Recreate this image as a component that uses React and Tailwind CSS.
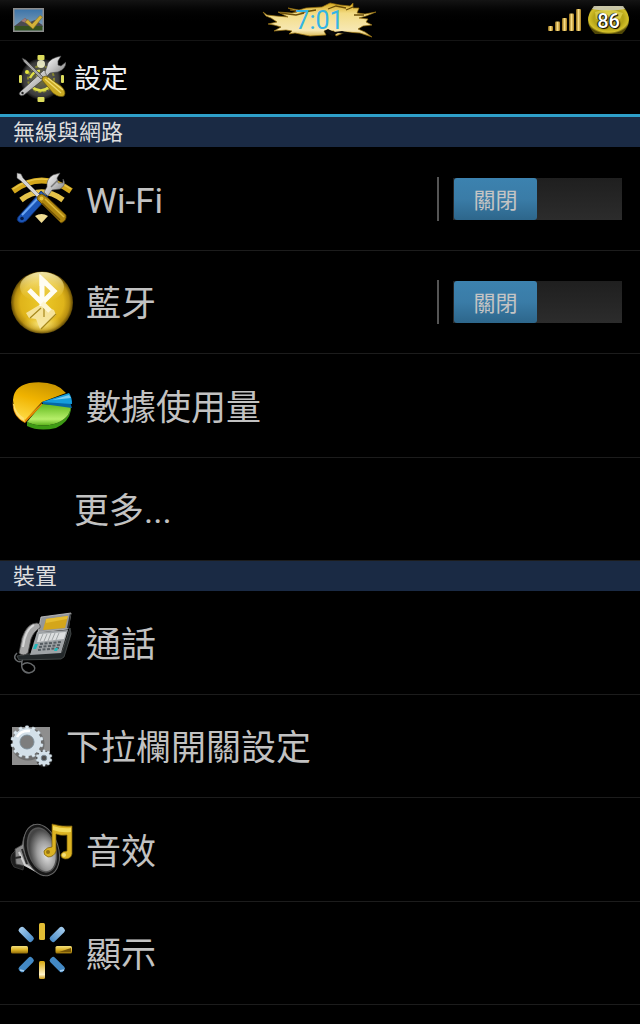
import { useState } from "react";

function Defs() {
  return (
    <svg className="absolute size-0" aria-hidden="true">
      <defs>
        <linearGradient id="gold" x1="0" y1="0" x2="0" y2="1">
          <stop offset="0" stopColor="#f3df7c" />
          <stop offset="0.5" stopColor="#dcb326" />
          <stop offset="1" stopColor="#8f6a08" />
        </linearGradient>
        <linearGradient id="goldBar" x1="0" y1="0" x2="1" y2="0">
          <stop offset="0" stopColor="#8a6410" />
          <stop offset="0.5" stopColor="#f7dc84" />
          <stop offset="1" stopColor="#a87c1c" />
        </linearGradient>
        <linearGradient id="steel" x1="0" y1="0" x2="1" y2="1">
          <stop offset="0" stopColor="#ffffff" />
          <stop offset="0.5" stopColor="#c4c4c4" />
          <stop offset="1" stopColor="#767676" />
        </linearGradient>
        <linearGradient id="blue" x1="0" y1="0" x2="0" y2="1">
          <stop offset="0" stopColor="#a6cdee" />
          <stop offset="1" stopColor="#4a8cc8" />
        </linearGradient>
      </defs>
    </svg>
  );
}

function PictureIcon() {
  return (
    <svg className="h-6 w-8" viewBox="0 0 32 24" aria-hidden="true">
      <defs>
        <linearGradient id="sky" x1="0" y1="0" x2="0" y2="1">
          <stop offset="0" stopColor="#3b73a8" />
          <stop offset="1" stopColor="#8fa9bd" />
        </linearGradient>
      </defs>
      <rect x="0.75" y="0.75" width="29.5" height="22.5" fill="url(#sky)" stroke="#8d8d8d" strokeWidth="1.5" />
      <path d="M1.5 18 8 13 12 10 17 14 22 12 29.5 17V19H1.5z" fill="#4b4a50" />
      <path d="M8 13 12 10 16 14 13 15z" fill="#a07a78" />
      <rect x="1.5" y="18" width="28" height="4.5" fill="#35501f" />
      <path d="M12 14 15 11.500 19 16 27 7.500 29.500 9 20 21z" fill="#d2b13a" stroke="#86701d" strokeWidth="0.6" />
    </svg>
  );
}

function Splash() {
  return (
    <svg className="h-10 w-[120px]" viewBox="0 0 120 40" aria-hidden="true">
      <defs>
        <linearGradient id="splash" x1="0" y1="0" x2="0" y2="1">
          <stop offset="0" stopColor="#d6a81c" />
          <stop offset="0.3" stopColor="#f3dc84" />
          <stop offset="0.8" stopColor="#f7e8b4" />
          <stop offset="1" stopColor="#d8b44a" />
        </linearGradient>
      </defs>
      <path
        d="M1 12 5 15 14 16 26 17 16 12 30 13 35 12 26 8 37 10 44 8 60 7 68 3 78 5 88 6 91 3 91 8 97 8 95 13 103 14 114 12 104 16 97 18 106 19 104 22 110 25 101 26 96 29 103 32 110 37 98 33 84 32 74 36 72 31 62 31 64 35 48 36 38 34 33 33 27 34 30 31 24 30 12 31 19 27 12 25 6 24 15 22 9 18 4 16z"
        fill="url(#splash)"
        stroke="#96700e"
        strokeWidth="0.7"
      />
      <path d="M18 13 34 15 42 13M28 10 42 12 54 10M66 9 74 6 84 8M84 10 91 7M92 15 102 15" fill="none" stroke="#6b4e08" strokeWidth="1.3" />
      <path d="M62 31 66 29 72 32 80 31 90 33 84 34 76 33 70 36z" fill="#080808" />
    </svg>
  );
}

function Signal() {
  return (
    <svg className="h-6 w-9" viewBox="0 0 36 24" aria-hidden="true" fill="url(#goldBar)">
      <rect x="1" y="18" width="5" height="5" rx="1" />
      <rect x="8" y="13.500" width="5" height="9.500" rx="1" />
      <rect x="15" y="10" width="5" height="13" rx="1" />
      <rect x="22" y="5.500" width="5" height="17.500" rx="1" />
      <rect x="29" y="1" width="5" height="22" rx="1" />
    </svg>
  );
}

function BatteryShape() {
  return (
    <svg className="col-start-1 row-start-1 h-[30px] w-[43px]" viewBox="0 0 43 30" aria-hidden="true">
      <defs>
        <radialGradient id="battery" cx="0.5" cy="0.45" r="0.55">
          <stop offset="0" stopColor="#d8c832" />
          <stop offset="0.65" stopColor="#b5a416" />
          <stop offset="0.88" stopColor="#d3c02a" />
          <stop offset="1" stopColor="#4f4606" />
        </radialGradient>
      </defs>
      <path d="M7 1H36Q42 8 42 15T35 29H8Q1 22 1 15T7 1z" fill="url(#battery)" />
      <path d="M7 1H36L38 4Q21 7 5 4z" fill="#c9c9c0" opacity="0.85" />
      <path d="M8 7Q21 2 36 8L33 14Q21 10 9 14z" fill="#f1e76c" opacity="0.5" />
    </svg>
  );
}

function HeaderIcon() {
  return (
    <svg className="size-12" viewBox="0 0 48 48" aria-hidden="true">
      <defs>
        <radialGradient id="ball">
          <stop offset="0" stopColor="#74743a" />
          <stop offset="0.6" stopColor="#4c4c4c" />
          <stop offset="0.85" stopColor="#3a3a3a" />
          <stop offset="1" stopColor="#101010" />
        </radialGradient>
      </defs>
      <circle cx="23" cy="24" r="20.500" fill="url(#ball)" />
      <circle cx="23" cy="24" r="13" fill="none" stroke="#86862f" strokeWidth="2" strokeDasharray="3 2" />
      <g fill="#dcdc5c">
        <rect x="19.500" y="0" width="7" height="5" rx="1" />
        <rect x="19.500" y="42" width="7" height="5" rx="1" />
        <rect x="1" y="20" width="3" height="8" rx="1" />
        <rect x="43" y="20" width="3" height="8" rx="1" />
      </g>
      <circle cx="23" cy="9" r="4" fill="#f2f2cc" opacity="0.9" />
      <circle cx="9" cy="17" r="2" fill="#e6e63c" />
      <path d="M12 23Q16 15 22 16M14 32Q23 39 31 32M18 27 20 20" fill="none" stroke="#dede48" strokeWidth="2.500" />
      <path d="M2 37 26 15 31 20 6 40Q3 42 1 39z" fill="url(#steel)" stroke="#363636" strokeWidth="0.7" />
      <circle cx="4.500" cy="38" r="1.200" fill="#222" />
      <path d="M27 17Q29 12 30 8 33 3 43 1L40 6 40 10 43 11 48 7Q48 14 40 17L32 18 29 21z" fill="url(#steel)" stroke="#444" strokeWidth="0.6" />
      <path d="M4 3 8 5 25 22 23 24 6 7z" fill="#a4a4a4" stroke="#333" strokeWidth="0.6" />
      <path d="M24 25Q24 21 28 21L43 31Q49 37 46 41 41 43 35 38z" fill="#c9a922" stroke="#655409" strokeWidth="0.7" />
      <path d="M27 24 43 38M30 23 45 35" stroke="#f0dc70" strokeWidth="1.300" />
    </svg>
  );
}

function WifiIcon() {
  return (
    <svg className="size-16" viewBox="0 0 64 64" aria-hidden="true">
      <path d="M3 24Q31.500 3 61 24" fill="none" stroke="#d3a71c" strokeWidth="6" />
      <path d="M3 22Q31.500 2 61 22" fill="none" stroke="#e6c548" strokeWidth="1.500" />
      <path d="M11 33Q31.500 17 53 33" fill="none" stroke="#e4c249" strokeWidth="5.500" />
      <path d="M25 49Q31.500 45 38 49L31.500 56z" fill="#f1dd93" />
      <path d="M8 50 31 24 38 30 16 54Q12 57 9 55T8 50z" fill="#1c56b8" stroke="#0a2866" strokeWidth="0.8" />
      <path d="M12 48 32 27" stroke="#6aa5f4" strokeWidth="2" />
      <circle cx="12" cy="51.500" r="1.800" fill="#061a45" />
      <path d="M34 25 37 20Q36 12 43 8L50 6 47 11 48 16 53 16 53 12Q57 18 50 22L42 23 38 29z" fill="url(#steel)" stroke="#555" strokeWidth="0.6" />
      <path d="M41 20 48 13" stroke="#777" strokeWidth="1.500" />
      <path d="M7 6 11 7 13 11 30 28 28 31 11 14 7 11z" fill="#d6d6d6" stroke="#555" strokeWidth="0.5" />
      <path d="M27 32Q27 28 32 27L38 31 56 48Q57 54 51 56L32 37z" fill="#b0870f" stroke="#584003" strokeWidth="0.8" />
      <path d="M35 32 54 50" stroke="#dcb93a" strokeWidth="1.600" />
      <path d="M32 36 50 53" stroke="#715207" strokeWidth="1.500" />
      <circle cx="31.500" cy="31.500" r="2" fill="#e6c43e" />
    </svg>
  );
}

function BluetoothIcon() {
  return (
    <svg className="size-16" viewBox="0 0 64 64" aria-hidden="true">
      <defs>
        <radialGradient id="btBall" cx="0.5" cy="0.5" r="0.5">
          <stop offset="0" stopColor="#ecc928" />
          <stop offset="0.7" stopColor="#dfb41a" />
          <stop offset="0.88" stopColor="#b88f10" />
          <stop offset="1" stopColor="#5d4605" />
        </radialGradient>
        <linearGradient id="btShine" x1="0" y1="0" x2="0" y2="1">
          <stop offset="0" stopColor="#fff6bc" stopOpacity="0.9" />
          <stop offset="1" stopColor="#f3d750" stopOpacity="0" />
        </linearGradient>
        <radialGradient id="btGlow">
          <stop offset="0" stopColor="#fff4a2" stopOpacity="0.9" />
          <stop offset="1" stopColor="#f4d64a" stopOpacity="0" />
        </radialGradient>
      </defs>
      <circle cx="32" cy="32.500" r="31" fill="url(#btBall)" />
      <ellipse cx="32" cy="17" rx="22" ry="15" fill="url(#btShine)" />
      <ellipse cx="32" cy="54" rx="20" ry="10" fill="url(#btGlow)" />
      <path d="M31 34 16 43 19 48 26 49 30 59 46 45 44 40z" fill="#f7e8a6" opacity="0.9" />
      <path d="M20 48 31 38M31 59 46 44M34 38V47" stroke="#a7891c" strokeWidth="1.200" />
      <path d="M30 34 45 22" stroke="#a88a1c" strokeWidth="2" />
      <path d="M19 20 32 33 44 21 32 9.500V36" fill="none" stroke="#fffdf2" strokeWidth="5" />
      <path d="M29.500 4 38 12 34 16H29.500z" fill="#fffdf2" />
      <path d="M32 33 40 41" stroke="#fdf6d4" strokeWidth="5" />
    </svg>
  );
}

function PieIcon() {
  return (
    <svg className="size-16" viewBox="0 0 64 64" aria-hidden="true">
      <defs>
        <linearGradient id="pieY" x1="0.6" y1="0" x2="0.2" y2="1">
          <stop offset="0" stopColor="#c99500" />
          <stop offset="0.45" stopColor="#f0b300" />
          <stop offset="1" stopColor="#ffdc46" />
        </linearGradient>
        <linearGradient id="pieG" x1="0" y1="0" x2="0" y2="1">
          <stop offset="0" stopColor="#62b91d" />
          <stop offset="0.7" stopColor="#b7ef6a" />
          <stop offset="1" stopColor="#58b019" />
        </linearGradient>
      </defs>
      <path d="M17 48Q30 54 44 50 60 45 61 32L61 36Q59 48 46 54 29 58 17 52z" fill="#3d9a14" />
      <path d="M32 30 61 32Q60 45 44 50 30 54 17 48z" fill="url(#pieG)" />
      <path d="M3 26Q2 39 15 45L32 29 32 31 15 49Q1 42 3 26z" fill="#e78a00" />
      <path d="M3 26Q4 10 24 8.500 46 7 56 19L32 28 15 46Q3 39 3 26z" fill="url(#pieY)" />
      <path d="M4 30Q6 39 14 44L15 48Q4 43 3 30z" fill="#ffe06c" />
      <path d="M32 28 60 28 62 34 33 30z" fill="#0668a5" />
      <path d="M32 28 59 19Q62 23 62 30z" fill="#159ddd" />
      <path d="M42 26 59 21 61 24z" fill="#7ccdf3" />
    </svg>
  );
}

function PhoneIcon() {
  return (
    <svg className="size-16" viewBox="0 0 64 64" aria-hidden="true">
      <path d="M18 43 52 41 60 17 61 23 54 46 51 48 9 49 7 45z" fill="#23282a" stroke="#4b5051" strokeWidth="0.8" />
      <path d="M31 6 61 2 58 18 28 21z" fill="#95979a" stroke="#c9c9c9" strokeWidth="0.8" />
      <path d="M60 2 61 4 59 18 57 17z" fill="#2f3234" />
      <path d="M36 8 58 5 55 17 33 19z" fill="#d4a61b" />
      <path d="M36 8 58 5 57 8 36 12z" fill="#e6bd30" />
      <path d="M27 21 58 19 51 42 20 44z" fill="#9fa3a6" />
      <path d="M29 23 56 21 54 28 27 31z" fill="#dcdedf" />
      <path d="M33 23 30 30M37 23 34 30M41 22 38 30M45 22 42 29M49 22 46 29" stroke="#a1a5a7" strokeWidth="1" />
      <path d="M30 33 52 31M29 36 51 34M28 39 50 37" stroke="#555c61" strokeWidth="2" strokeDasharray="3 1.500" />
      <path d="M25 33 28 33 26 38 23 38zM45 37 48 37 47 40 44 40z" fill="#22b7bb" />
      <path d="M27 12Q31 13 30 17 24 20 21 28L18 42Q13 46 9 42L12 27Q17 12 27 12z" fill="#a6a6a6" stroke="#414141" strokeWidth="0.8" />
      <path d="M24 14Q15 19 13 36" fill="none" stroke="#ededed" strokeWidth="2" opacity="0.7" />
      <path d="M7 42Q3 46 6 49T12 50Q10 61 19 62 27 60 24 55 18 49 12 54" fill="none" stroke="#66696b" strokeWidth="1.500" />
    </svg>
  );
}

function Gear({ cx, cy, r, hole, teeth, tooth }) {
  return (
    <g fill="#dde8ef" stroke="#b3c3ce" strokeWidth="0.4">
      {Array.from({ length: teeth }, (_, i) => (
        <rect
          key={i}
          x={cx - tooth / 2}
          y={cy - r - tooth * 0.7}
          width={tooth}
          height={tooth * 1.5}
          rx="0.6"
          transform={`rotate(${(360 / teeth) * i} ${cx} ${cy})`}
        />
      ))}
      <circle cx={cx} cy={cy} r={(r + hole) / 2} fill="none" stroke="#d3e0e9" strokeWidth={r - hole} />
      <circle cx={cx} cy={cy} r={hole} fill="none" stroke="#7c8c97" strokeWidth="0.9" />
    </g>
  );
}

function GearsIcon() {
  return (
    <svg className="size-11" viewBox="0 0 44 44" aria-hidden="true">
      <rect x="2" y="3" width="38" height="38" fill="#8e8e8e" />
      <circle cx="18" cy="20" r="16.500" fill="#4c4c4c" opacity="0.5" />
      <circle cx="17" cy="18" r="8" fill="#7d7d7d" />
      <Gear cx={17} cy={18} r={14} hole={7} teeth={14} tooth={3.2} />
      <path d="M7 13Q11 6 20 7" fill="none" stroke="#fff" strokeWidth="2.500" />
      <circle cx="34" cy="35" r="8" fill="#333" opacity="0.7" />
      <Gear cx={34} cy={34} r={6.6} hole={2.8} teeth={10} tooth={2.2} />
    </svg>
  );
}

function SpeakerIcon() {
  return (
    <svg className="size-16" viewBox="0 0 64 64" aria-hidden="true">
      <defs>
        <radialGradient id="cone" cx="0.6" cy="0.65" r="0.6">
          <stop offset="0" stopColor="#e2e2e2" />
          <stop offset="0.55" stopColor="#9c9c9c" />
          <stop offset="1" stopColor="#444" />
        </radialGradient>
      </defs>
      <path d="M10 28 2 36Q-1 42 4 49L13 52 16 34z" fill="#1d1d1d" stroke="#444" strokeWidth="0.7" />
      <path d="M24 6Q14 12 12 27L5 31 6 46 16 48 34 58 29 30z" fill="#8b8b8b" stroke="#474747" strokeWidth="0.8" />
      <path d="M21 10 15 26M9 34 15 47 28 54" fill="none" stroke="#cfcfcf" strokeWidth="2" />
      <path d="M12 31 17 46M5 40 11 39" stroke="#2b2b2b" strokeWidth="2" />
      <ellipse cx="31.500" cy="32" rx="17" ry="26.500" fill="#171717" stroke="#666" strokeWidth="1" transform="rotate(-17 31.500 32)" />
      <ellipse cx="32" cy="32" rx="13.500" ry="22.500" fill="url(#cone)" stroke="#555" strokeWidth="1.500" transform="rotate(-17 32 32)" />
      <path d="M42 6Q52 9 62 8V36Q61 41 55 41 50 40 51 36 53 33 57 33V17Q51 18 46 16V33Q44 39 38 39 33 37 34 33 37 29 42 29z" fill="#dcb323" stroke="#745909" strokeWidth="0.7" />
      <path d="M43 8Q52 11 61 10V14Q51 15 43 12z" fill="#f3da5a" />
      <circle cx="38" cy="34" r="2" fill="#957413" />
      <circle cx="54" cy="37" r="2" fill="#f6e178" />
    </svg>
  );
}

function DisplayIcon() {
  return (
    <svg className="size-16" viewBox="0 0 64 64" aria-hidden="true">
      <defs>
        <linearGradient id="rayDown" x1="0" y1="0" x2="0" y2="1">
          <stop offset="0" stopColor="#d8a80e" />
          <stop offset="0.75" stopColor="#fff3ca" />
          <stop offset="1" stopColor="#c79510" />
        </linearGradient>
      </defs>
      <g fill="url(#blue)">
        <rect x="28.500" y="-2" width="6.500" height="18" rx="2.500" transform="rotate(-45 31.700 29)" />
        <rect x="28.500" y="-2" width="6.500" height="18" rx="2.500" transform="rotate(45 31.700 29)" />
      </g>
      <g fill="#4389c5">
        <rect x="28.500" y="41" width="6.500" height="18" rx="2.500" transform="rotate(45 31.700 28)" />
        <rect x="28.500" y="41" width="6.500" height="18" rx="2.500" transform="rotate(-45 31.700 28)" />
      </g>
      <path d="M10 49 14 50M50 50 54 49" stroke="#a9d0f0" strokeWidth="1.600" />
      <rect x="29" y="2" width="6" height="17" rx="1.500" fill="#e2bd34" />
      <rect x="29" y="40" width="6" height="18" rx="1.500" fill="url(#rayDown)" />
      <rect x="1" y="25" width="17" height="7.500" rx="1.500" fill="url(#gold)" />
      <rect x="45.500" y="25" width="16.500" height="7.500" rx="1.500" fill="url(#gold)" />
      <path d="M49 31 61 27V31z" fill="#765607" />
    </svg>
  );
}

function Toggle({ label }) {
  const [on, setOn] = useState(false);
  return (
    <div className="flex h-11 items-center border-l-2 border-[#555] pl-[14px]">
      <button
        type="button"
        role="switch"
        aria-checked={on}
        aria-label={label}
        onClick={() => setOn(!on)}
        className={`flex h-[42px] w-[169px] bg-linear-to-b from-[#1f1f1f] to-[#2c2c2c] px-px ${on ? "justify-end" : "justify-start"}`}
      >
        <span className="flex h-full w-[83px] items-center justify-center rounded-[3px] bg-linear-to-b from-[#3c82af] via-[#3a7ca7] to-[#2d668b] pt-[3px] text-[22px] text-[#c4c4c4]">
          {on ? "開啟" : "關閉"}
        </span>
      </button>
    </div>
  );
}

function Section({ title, children }) {
  return (
    <section>
      <h2 className="flex h-[30px] items-center bg-[#1a2a44] px-[13px] text-[22px] text-[#dedede]">{title}</h2>
      <ul>{children}</ul>
    </section>
  );
}

function Row({ icon, label, toggle }) {
  return (
    <li className="flex items-center border-b border-[#1c1c1c] pr-[18px] pl-[10px] odd:h-[104px] even:h-[103px]">
      <a href="#" className={`flex h-full grow items-center gap-3 text-[35px] text-[#c2c2c2] ${icon ? "" : "pl-16"}`}>
        {icon}
        <span className="pt-[7px]">{label}</span>
      </a>
      {toggle && <Toggle label={label} />}
    </li>
  );
}

export default function App() {
  return (
    <div className="min-h-screen bg-black font-[Roboto,'Noto_Sans_CJK_TC',sans-serif]">
      <Defs />
      <div className="grid h-[41px] grid-cols-[1fr_auto_1fr] items-center border-b border-[#141414] bg-linear-to-b from-[#141414] to-black to-60% pr-[10px] pl-[13px]">
        <PictureIcon />
        <div className="grid place-items-center">
          <div className="col-start-1 row-start-1">
            <Splash />
          </div>
          <time className="z-10 col-start-1 row-start-1 pt-px pr-1 text-[25px] leading-none text-[#33b5e5]">7:01</time>
        </div>
        <div className="flex items-center justify-end gap-1">
          <Signal />
          <div className="grid place-items-center">
            <BatteryShape />
            <span className="z-10 col-start-1 row-start-1 pt-0.5 text-xl leading-none font-medium text-white [text-shadow:1px_1px_1px_#000,-1px_0_1px_#000]">86</span>
          </div>
        </div>
      </div>
      <header className="flex h-[76px] items-center gap-2 border-b-[3px] border-[#2e9fca] px-[18px] pt-0.5">
        <HeaderIcon />
        <h1 className="pt-0.5 text-[27px] text-[#f0f0f0]">設定</h1>
      </header>
      <main>
        <Section title="無線與網路">
          <Row icon={<WifiIcon />} label="Wi-Fi" toggle />
          <Row icon={<BluetoothIcon />} label="藍牙" toggle />
          <Row icon={<PieIcon />} label="數據使用量" />
          <Row label="更多..." />
        </Section>
        <Section title="裝置">
          <Row icon={<PhoneIcon />} label="通話" />
          <Row icon={<GearsIcon />} label="下拉欄開關設定" />
          <Row icon={<SpeakerIcon />} label="音效" />
          <Row icon={<DisplayIcon />} label="顯示" />
        </Section>
      </main>
    </div>
  );
}
